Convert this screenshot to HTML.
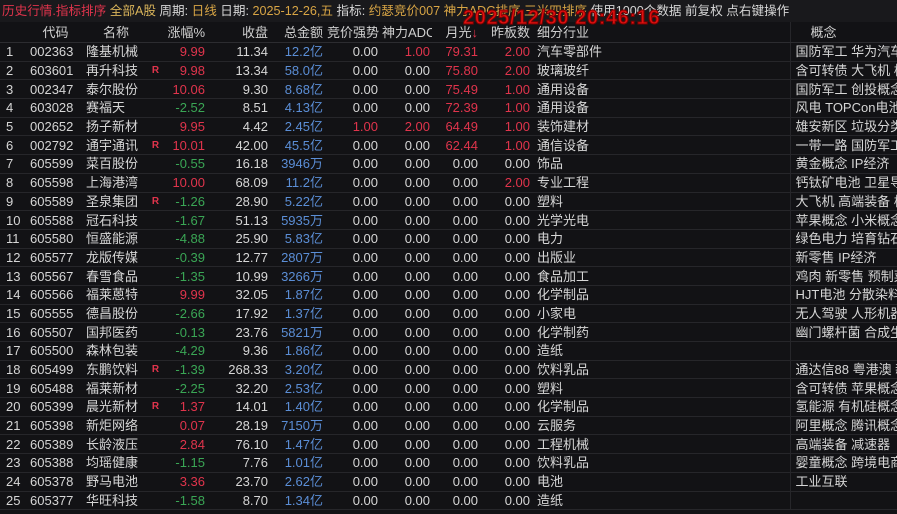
<!DOCTYPE html><html><head><meta charset="utf-8"><style>
body{margin:0;width:897px;height:514px;background:#121215;overflow:hidden;font-family:"Liberation Sans","Noto Sans CJK SC",sans-serif;font-size:13px;color:#d6d6d6;position:relative}
.top{position:absolute;left:0;top:0;width:897px;height:22px;background:#19191c;white-space:nowrap;line-height:22px;font-size:12.6px;padding-left:2px}
.r{color:#e0344c}.y{color:#d9b45a}.o{color:#d8a545}.g{color:#3aa655}.b{color:#5b8ed6}.w{color:#d6d6d6}
.ts{position:absolute;left:463px;top:8px;font-size:20px;font-weight:bold;color:#e01010;-webkit-text-stroke:1px #7a0000;letter-spacing:0.6px;line-height:20px}
table{position:absolute;left:0;top:22px;border-collapse:collapse;table-layout:fixed;width:897px}
td{height:17.7px;padding:0 2px;border-bottom:1px solid #26262a;white-space:nowrap;overflow:hidden;text-align:right;line-height:17px}
tr.h td{height:20px;border-bottom:1px solid #2c2c30;color:#cfcfcf}
td:nth-child(1){text-align:left;padding-left:6px}
td:nth-child(2),td:nth-child(3){text-align:left;padding-left:3px}
td:nth-child(4){text-align:center;font-size:10px;color:#e0344c;font-weight:bold;padding:0}
td:nth-child(12),td:nth-child(13){text-align:left;padding-left:5px}
td:nth-child(13){border-left:1px solid #26262a}
</style></head><body>
<div class="top"><span class="r">历史行情.指标排序</span> <span class="y">全部A股</span> 周期: <span class="o">日线</span> 日期: <span class="o">2025-12-26,五</span> 指标: <span class="o">约瑟竞价007 神力ADC排序 三米四排序</span> 使用1000个数据 前复权 点右键操作</div>
<div class="ts">2025/12/30 20:46:16</div>
<table>
<colgroup><col style="width:27px"><col style="width:56px"><col style="width:65px"><col style="width:15px"><col style="width:44px"><col style="width:63px"><col style="width:55px"><col style="width:55px"><col style="width:52px"><col style="width:48px"><col style="width:52px"><col style="width:258px"><col style="width:107px"></colgroup>
<tr class="h"><td></td><td style="text-align:center">代码</td><td style="text-align:center">名称</td><td></td><td>涨幅%</td><td>收盘</td><td>总金额</td><td>竞价强势</td><td>神力ADC</td><td>月光<span class="r">↓</span></td><td>昨板数</td><td>细分行业</td><td style="padding-left:20px">概念</td></tr>
<tr><td>1</td><td>002363</td><td>隆基机械</td><td></td><td class="r">9.99</td><td>11.34</td><td class="b">12.2亿</td><td>0.00</td><td class="r">1.00</td><td class="r">79.31</td><td class="r">2.00</td><td>汽车零部件</td><td>国防军工 华为汽车</td></tr>
<tr><td>2</td><td>603601</td><td>再升科技</td><td>R</td><td class="r">9.98</td><td>13.34</td><td class="b">58.0亿</td><td>0.00</td><td>0.00</td><td class="r">75.80</td><td class="r">2.00</td><td>玻璃玻纤</td><td>含可转债 大飞机 核</td></tr>
<tr><td>3</td><td>002347</td><td>泰尔股份</td><td></td><td class="r">10.06</td><td>9.30</td><td class="b">8.68亿</td><td>0.00</td><td>0.00</td><td class="r">75.49</td><td class="r">1.00</td><td>通用设备</td><td>国防军工 创投概念</td></tr>
<tr><td>4</td><td>603028</td><td>赛福天</td><td></td><td class="g">-2.52</td><td>8.51</td><td class="b">4.13亿</td><td>0.00</td><td>0.00</td><td class="r">72.39</td><td class="r">1.00</td><td>通用设备</td><td>风电 TOPCon电池</td></tr>
<tr><td>5</td><td>002652</td><td>扬子新材</td><td></td><td class="r">9.95</td><td>4.42</td><td class="b">2.45亿</td><td class="r">1.00</td><td class="r">2.00</td><td class="r">64.49</td><td class="r">1.00</td><td>装饰建材</td><td>雄安新区 垃圾分类</td></tr>
<tr><td>6</td><td>002792</td><td>通宇通讯</td><td>R</td><td class="r">10.01</td><td>42.00</td><td class="b">45.5亿</td><td>0.00</td><td>0.00</td><td class="r">62.44</td><td class="r">1.00</td><td>通信设备</td><td>一带一路 国防军工</td></tr>
<tr><td>7</td><td>605599</td><td>菜百股份</td><td></td><td class="g">-0.55</td><td>16.18</td><td class="b">3946万</td><td>0.00</td><td>0.00</td><td>0.00</td><td>0.00</td><td>饰品</td><td>黄金概念 IP经济</td></tr>
<tr><td>8</td><td>605598</td><td>上海港湾</td><td></td><td class="r">10.00</td><td>68.09</td><td class="b">11.2亿</td><td>0.00</td><td>0.00</td><td>0.00</td><td class="r">2.00</td><td>专业工程</td><td>钙钛矿电池 卫星导</td></tr>
<tr><td>9</td><td>605589</td><td>圣泉集团</td><td>R</td><td class="g">-1.26</td><td>28.90</td><td class="b">5.22亿</td><td>0.00</td><td>0.00</td><td>0.00</td><td>0.00</td><td>塑料</td><td>大飞机 高端装备 核</td></tr>
<tr><td>10</td><td>605588</td><td>冠石科技</td><td></td><td class="g">-1.67</td><td>51.13</td><td class="b">5935万</td><td>0.00</td><td>0.00</td><td>0.00</td><td>0.00</td><td>光学光电</td><td>苹果概念 小米概念</td></tr>
<tr><td>11</td><td>605580</td><td>恒盛能源</td><td></td><td class="g">-4.88</td><td>25.90</td><td class="b">5.83亿</td><td>0.00</td><td>0.00</td><td>0.00</td><td>0.00</td><td>电力</td><td>绿色电力 培育钻石</td></tr>
<tr><td>12</td><td>605577</td><td>龙版传媒</td><td></td><td class="g">-0.39</td><td>12.77</td><td class="b">2807万</td><td>0.00</td><td>0.00</td><td>0.00</td><td>0.00</td><td>出版业</td><td>新零售 IP经济</td></tr>
<tr><td>13</td><td>605567</td><td>春雪食品</td><td></td><td class="g">-1.35</td><td>10.99</td><td class="b">3266万</td><td>0.00</td><td>0.00</td><td>0.00</td><td>0.00</td><td>食品加工</td><td>鸡肉 新零售 预制菜</td></tr>
<tr><td>14</td><td>605566</td><td>福莱蒽特</td><td></td><td class="r">9.99</td><td>32.05</td><td class="b">1.87亿</td><td>0.00</td><td>0.00</td><td>0.00</td><td>0.00</td><td>化学制品</td><td>HJT电池 分散染料</td></tr>
<tr><td>15</td><td>605555</td><td>德昌股份</td><td></td><td class="g">-2.66</td><td>17.92</td><td class="b">1.37亿</td><td>0.00</td><td>0.00</td><td>0.00</td><td>0.00</td><td>小家电</td><td>无人驾驶 人形机器</td></tr>
<tr><td>16</td><td>605507</td><td>国邦医药</td><td></td><td class="g">-0.13</td><td>23.76</td><td class="b">5821万</td><td>0.00</td><td>0.00</td><td>0.00</td><td>0.00</td><td>化学制药</td><td>幽门螺杆菌 合成生物</td></tr>
<tr><td>17</td><td>605500</td><td>森林包装</td><td></td><td class="g">-4.29</td><td>9.36</td><td class="b">1.86亿</td><td>0.00</td><td>0.00</td><td>0.00</td><td>0.00</td><td>造纸</td><td></td></tr>
<tr><td>18</td><td>605499</td><td>东鹏饮料</td><td>R</td><td class="g">-1.39</td><td>268.33</td><td class="b">3.20亿</td><td>0.00</td><td>0.00</td><td>0.00</td><td>0.00</td><td>饮料乳品</td><td>通达信88 粤港澳 新</td></tr>
<tr><td>19</td><td>605488</td><td>福莱新材</td><td></td><td class="g">-2.25</td><td>32.20</td><td class="b">2.53亿</td><td>0.00</td><td>0.00</td><td>0.00</td><td>0.00</td><td>塑料</td><td>含可转债 苹果概念</td></tr>
<tr><td>20</td><td>605399</td><td>晨光新材</td><td>R</td><td class="r">1.37</td><td>14.01</td><td class="b">1.40亿</td><td>0.00</td><td>0.00</td><td>0.00</td><td>0.00</td><td>化学制品</td><td>氢能源 有机硅概念</td></tr>
<tr><td>21</td><td>605398</td><td>新炬网络</td><td></td><td class="r">0.07</td><td>28.19</td><td class="b">7150万</td><td>0.00</td><td>0.00</td><td>0.00</td><td>0.00</td><td>云服务</td><td>阿里概念 腾讯概念</td></tr>
<tr><td>22</td><td>605389</td><td>长龄液压</td><td></td><td class="r">2.84</td><td>76.10</td><td class="b">1.47亿</td><td>0.00</td><td>0.00</td><td>0.00</td><td>0.00</td><td>工程机械</td><td>高端装备 减速器</td></tr>
<tr><td>23</td><td>605388</td><td>均瑶健康</td><td></td><td class="g">-1.15</td><td>7.76</td><td class="b">1.01亿</td><td>0.00</td><td>0.00</td><td>0.00</td><td>0.00</td><td>饮料乳品</td><td>婴童概念 跨境电商</td></tr>
<tr><td>24</td><td>605378</td><td>野马电池</td><td></td><td class="r">3.36</td><td>23.70</td><td class="b">2.62亿</td><td>0.00</td><td>0.00</td><td>0.00</td><td>0.00</td><td>电池</td><td>工业互联</td></tr>
<tr><td>25</td><td>605377</td><td>华旺科技</td><td></td><td class="g">-1.58</td><td>8.70</td><td class="b">1.34亿</td><td>0.00</td><td>0.00</td><td>0.00</td><td>0.00</td><td>造纸</td><td></td></tr>
</table>
</body></html>
